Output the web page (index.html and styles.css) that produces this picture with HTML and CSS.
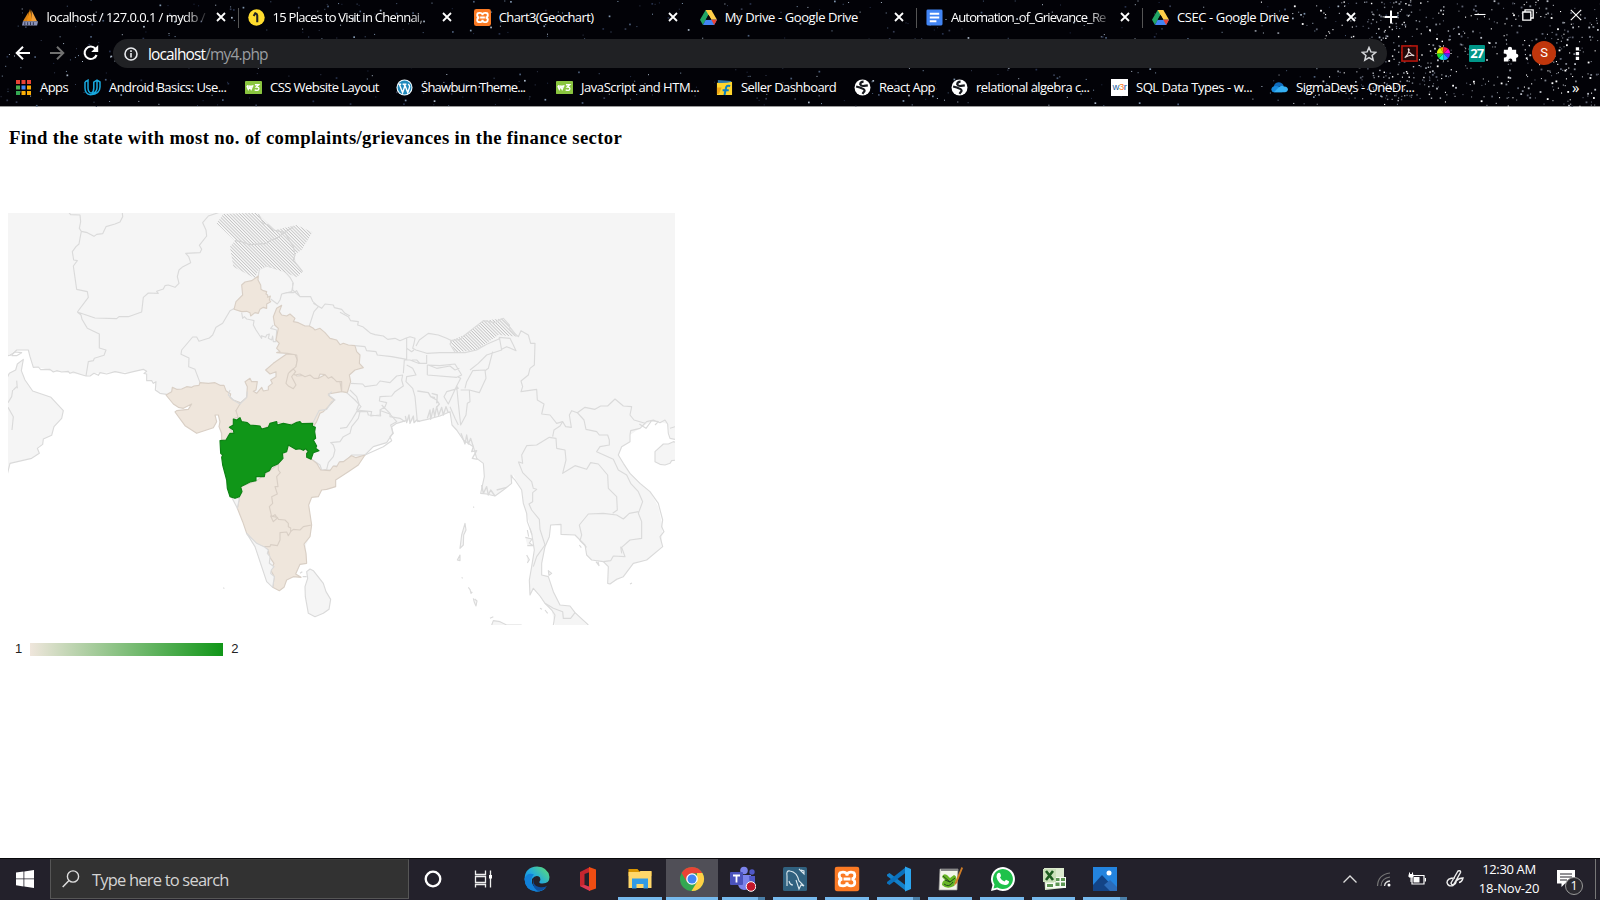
FILE: index.html
```html
<!DOCTYPE html>
<html lang="en">
<head>
<meta charset="utf-8">
<title>Chart3(Geochart)</title>
<link rel="stylesheet" href="styles.css">
</head>
<body>
<svg class="defs" width="0" height="0">
  <defs>
    <symbol id="x" viewBox="0 0 10 10"><path d="M1 1l8 8M9 1l-8 8" stroke="#fff" stroke-width="1.8"/></symbol>
    <symbol id="drive" viewBox="0 0 16 16"><path d="M5.3 1h5.4L5.2 10.8 2.8 15 0 10.2z" fill="#22a565"/><path d="M5.3 1h5.4L16 10.2h-5.4z" fill="#ffcf48"/><path d="M2.8 15L5.4 10.2H16L13.3 15z" fill="#4285f4"/><path d="M8 5.4l2.7 4.8H5.3z" fill="#05070b"/><path d="M10.6 10.2H16L13.3 15z" fill="#ea4335"/></symbol>
    <symbol id="xampp" viewBox="0 0 18 18"><rect width="18" height="18" rx="2.5" fill="#fb7a24"/><path d="M5 4.2q-1.6 0-1.6 2.3T5.6 9q-2.2.3-2.2 2.6T5 13.8q4 .6 4-2.5 0 3.100 4 2.500 1.600-.300 1.600-2.300T12.400 9q2.200-.300 2.200-2.500T13 4.200Q9 3.600 9 6.700 9 3.600 5 4.200zM6.500 9h5" fill="none" stroke="#fff" stroke-width="2"/></symbol>
    <symbol id="w3" viewBox="0 0 18 14"><rect width="18" height="14" rx="1" fill="#8ac53f"/><path d="M2 5.500l1.500 3.500 1.500-3 1.500 3L8 5.500M2 5q3 1.500 7 0M10.500 4h4L12 6.500q3 0 2.600 2-.8 2.500-4.400 1" fill="none" stroke="#fff" stroke-width="1.500"/></symbol>
    <symbol id="globe" viewBox="0 0 16 16"><circle cx="8" cy="8" r="7.500" fill="#fff"/><path d="M9 2.500Q6 2.500 5.800 5 7 7 9.500 6.500L13 6M2 7l3.500 1 3.500 1.500q2 1.500 0 3L8 14" fill="none" stroke="#16181d" stroke-width="2"/></symbol>
    <pattern id="hatch" width="6.800" height="8" patternUnits="userSpaceOnUse" patternTransform="rotate(-45)"><rect width="6.800" height="8" fill="#fafafa"/><path d="M3 0V8" stroke="#b9b9b9" stroke-width="2.300"/></pattern>
    <linearGradient id="edge" x1="0" y1="1" x2="1" y2="0"><stop stop-color="#0878d4"/><stop offset=".5" stop-color="#22a9df"/><stop offset="1" stop-color="#63e26b"/></linearGradient>
  </defs>
</svg>

<header class="chrome">
  <svg class="stars" id="stars" width="1600" height="107"></svg>
  <div class="tabs">
    <div class="tab"><svg class="fav" viewBox="0 0 18 18"><path d="M1 13L7 3V13z" fill="#d98213"/><path d="M5 13L8.500 0l2.500 13z" fill="#f29111"/><path d="M10 13V1l6 12z" fill="#f4a23a"/><path d="M1 13h16l-1 4.500H0z" fill="#8b93b8"/><path d="M3 14v3M6 14v3M9 14v3M12 14v3" stroke="#292d45"/></svg><span class="title fade t1">localhost / 127.0.0.1 / mydb /</span><svg class="close"><use href="#x"/></svg></div>
    <div class="tab sep"><svg class="fav" viewBox="0 0 18 18"><circle cx="9" cy="9" r="8.700" fill="#ffdc2e"/><path d="M9.800 14V7q0-2-2-2.500L6 7.500" fill="none" stroke="#222" stroke-width="2.200"/></svg><span class="title fade t2">15 Places to Visit in Chennai,</span><svg class="close"><use href="#x"/></svg></div>
    <div class="tab"><svg class="fav"><use href="#xampp"/></svg><span class="title t3">Chart3(Geochart)</span><svg class="close"><use href="#x"/></svg></div>
    <div class="tab"><svg class="fav"><use href="#drive"/></svg><span class="title t4">My Drive - Google Drive</span><svg class="close"><use href="#x"/></svg></div>
    <div class="tab sep"><svg class="fav" viewBox="0 0 18 18"><rect x=".5" y=".5" width="17" height="17" rx="1.500" fill="#4285f4"/><path d="M4 5h10M4 9h10M4 13h7" stroke="#fff" stroke-width="2"/></svg><span class="title fade t5">Automation_of_Grievance_Re</span><svg class="close"><use href="#x"/></svg></div>
    <div class="tab sep"><svg class="fav"><use href="#drive"/></svg><span class="title t6">CSEC - Google Drive</span><svg class="close"><use href="#x"/></svg></div>
    <svg class="plus" viewBox="0 0 14 14"><path d="M7 .5v13M.5 7h13" stroke="#fff" stroke-width="2"/></svg>
    <div class="winbtns">
      <svg viewBox="0 0 12 12"><path d="M.5 5.500h11" stroke="#fff" stroke-width="1.100"/></svg>
      <svg viewBox="0 0 12 12"><path d="M.8 3h8v8.200h-8zM3 3V.8h8.200V9H9" fill="none" stroke="#fff" stroke-width="1.300"/></svg>
      <svg viewBox="0 0 12 12"><path d="M.8.800l10.400 10.400M11.200.800L.8 11.200" stroke="#fff" stroke-width="1.200"/></svg>
    </div>
  </div>

  <div class="toolbar">
    <div class="nav">
      <svg viewBox="0 0 16 16"><path d="M15 8H2M8 1.700L1.700 8 8 14.300" fill="none" stroke="#fff" stroke-width="2"/></svg>
      <svg viewBox="0 0 16 16"><path d="M1 8h13M8 1.700L14.300 8 8 14.300" fill="none" stroke="#717171" stroke-width="2"/></svg>
      <svg viewBox="0 0 16 16"><path d="M13.600 10A6.200 6.200 0 1 1 12.500 3.700" fill="none" stroke="#fff" stroke-width="2.100"/><path d="M15.200 0v7h-7z" fill="#fff"/></svg>
    </div>
    <div class="omnibox">
      <svg class="info" viewBox="0 0 14 14"><circle cx="7" cy="7" r="6" fill="none" stroke="#e8eaed" stroke-width="1.600"/><path d="M7 6v4.500M7 3.300v1.600" stroke="#e8eaed" stroke-width="1.600"/></svg>
      <span class="url">localhost<i>/my4.php</i></span>
      <svg class="bookmark-star" viewBox="0 0 16 16"><path d="M8 1.500l1.900 4.400 4.800.4-3.600 3.200 1.100 4.700L8 11.700l-4.200 2.500 1.100-4.700L1.300 6.300l4.800-.4z" fill="none" stroke="#d5d7da" stroke-width="1.500"/></svg>
    </div>
    <div class="exts">
      <svg viewBox="0 0 18 18"><rect x="1" y="1" width="16" height="16" fill="#210708" stroke="#b5160c" stroke-width="1.700"/><path d="M4 13.500Q8 10 8.700 5q-.7-2-1-.3Q9 10 14 11.300q-4-1.500-9 1.500" fill="none" stroke="#e8dada" stroke-width="1.200"/></svg>
      <svg viewBox="0 0 18 18"><path d="M9 9L5.500 2.900A7 7 0 0 1 9 2z" fill="#ff9b00"/><path d="M9 9V2a7 7 0 0 1 5 2z" fill="#ff1744"/><path d="M9 9l5-5a7 7 0 0 1 2 5z" fill="#f0c"/><path d="M9 9h7a7 7 0 0 1-2 5z" fill="#4b27ff"/><path d="M9 9l5 5a7 7 0 0 1-5 2z" fill="#1aa3ff"/><path d="M9 9v7a7 7 0 0 1-5-2z" fill="#14efcf"/><path d="M9 9l-5 5a7 7 0 0 1-2-5z" fill="#19dc29"/><path d="M9 9H2a7 7 0 0 1 3.500-6.100z" fill="#dcf000"/><path d="M9 0v2M9 16v2M0 9h2M16 9h2" stroke="#999"/></svg>
      <span class="cal">27</span>
      <svg viewBox="0 0 18 18"><path d="M2 5h4.200V4a2.200 2.200 0 0 1 4.400 0v1H15v4.300h.6a2.200 2.200 0 0 1 0 4.300H15v3.800h-4v-1a2.100 2.100 0 0 0-4.200 0v1H2v-4.200h1a2.100 2.100 0 0 0 0-4.200H2z" fill="#fff"/></svg>
      <span class="avatar">S</span>
      <svg viewBox="0 0 18 18"><path d="M7.200 2.500h3.500v3.300H7.200zM7.200 7.500h3.500v3.300H7.200zM7.200 12.500h3.500v3.300H7.200z" fill="#fff"/></svg>
    </div>
  </div>

  <div class="bookmarks">
    <div class="bm b1"><svg viewBox="0 0 17 17"><path d="M1 1h4v4H1zM6.500 1h4v4h-4zM12 1h4v4h-4z" fill="#ea4335"/><path d="M1 6.500h4v4H1z" fill="#4caf50"/><path d="M6.500 6.500h4v4h-4z" fill="#4285f4"/><path d="M12 6.500h4v4h-4zM6.500 12h4v4h-4zM12 12h4v4h-4z" fill="#fbad05"/><path d="M1 12h4v4H1z" fill="#34a853"/></svg><span>Apps</span></div>
    <div class="bm b2"><svg viewBox="0 0 17 17"><path d="M1 3l3-1.800V9q0 4 3.300 5.300M1 3v6q0 6 5.500 6.800Q16 15 16 8V3l-3-1.800-3.200 1.900V9q0 4-2.500 5.500M13 1.200v7.500Q13 13 8 15" fill="none" stroke="#18a9df" stroke-width="1.500"/></svg><span>Android Basics: Use...</span></div>
    <div class="bm b3"><svg><use href="#w3"/></svg><span>CSS Website Layout</span></div>
    <div class="bm b4"><svg viewBox="0 0 18 18"><circle cx="9" cy="9" r="8.500" fill="#f2fbff"/><circle cx="9" cy="9" r="7.300" fill="#218abc"/><path d="M2.500 5.500h3M3.500 5.500l3.500 9 2.300-7-.8-2M7 5.500h4M9 5.500l3.500 9 2-6.300q0-1.500-1.500-3" fill="none" stroke="#fff" stroke-width="1.500"/></svg><span>Shawburn Theme...</span></div>
    <div class="bm b5"><svg><use href="#w3"/></svg><span>JavaScript and HTM...</span></div>
    <div class="bm b6"><svg viewBox="0 0 18 18"><path d="M2 1l14 1v3H2z" fill="#3279a9"/><path d="M1 4q8 1 16-1v14H1z" fill="#ffd52d"/><path d="M1 9h5l-3 7H1z" fill="#efa516"/><path d="M15 7.500q-4-1.500-4.500 2.500L9 17M7 12h6.500" fill="none" stroke="#087fc4" stroke-width="2.200"/></svg><span>Seller Dashboard</span></div>
    <div class="bm b7"><svg><use href="#globe"/></svg><span>React App</span></div>
    <div class="bm b8"><svg><use href="#globe"/></svg><span>relational algebra c...</span></div>
    <div class="bm b9"><b class="w3r">w<i>3</i>r</b><span>SQL Data Types - w...</span></div>
    <div class="bm b10"><svg viewBox="0 0 18 18"><path d="M3 9q0-5 5-5.500 4 0 5.500 4z" fill="#0f6cbd"/><path d="M1 13q-2-4 3-5.500 3-.500 4 .5l4 6H3q-1.500 0-2-1z" fill="#1689dc"/><path d="M8 9q3-3 6-1 4 .3 4 3.500-.5 2.500-3 2.500H3z" fill="#36b0f3"/></svg><span>SigmaDevs - OneDr...</span></div>
    <span class="more">»</span>
  </div>
</header>

<main class="page">
  <h4>Find the state with most no. of complaints/grievances in the finance sector</h4>
  <svg class="map" viewBox="8 213 667 412" width="667" height="412">
    <rect x="8" y="213" width="667" height="412" fill="#f5f5f5"/>

    <!-- seas -->
    <g fill="#fff">
      <path transform="translate(0 200) scale(.33333)" d="M24 467L35 458 50 450 85 450 90 470 100 502 130 505 160 516 185 516 220 521 245 524 258 528 290 520 345 517 400 515 430 508 440 520 440 542 465 545 470 575 500 583 520 612 545 625 575 612 565 628 525 636 555 677 590 700 640 900 640 1300 0 1300 0 467z"/>
      <path transform="translate(150 390) scale(.33333)" d="M75 66L105 107 140 130 187 113 195 75 205 75 207 110 215 150 210 160 212 200 222 240 232 300 245 322 262 355 278 395 290 430 315 470 335 530 350 575 368 592 388 602 402 592 410 570 430 560 455 560 437 552 450 525 470 520 468 465 480 440 485 405 476 345 485 322 505 318 515 300 530 298 557 290 557 270 595 245 625 225 645 195 760 195 760 720-50 720-50 66z"/>
      <path transform="translate(340 300) scale(.33333)" d="M75 465L100 440 140 428 158 400 155 380 170 370 198 362 240 362 300 348 330 335 336 375 370 420 400 440 410 475 430 490 433 530 422 580 465 588 515 550 520 525 545 570 550 610 560 640 575 700 583 750 575 800 568 840 570 885 580 865 615 910 635 930 645 980 0 980 0 560z"/>
      <path transform="translate(340 300) scale(.33333)" d="M983 372L940 360 900 385 870 405 870 425 845 440 835 465 870 520 930 575 955 620 968 680 965 740 920 780 880 790 850 830 810 852 803 850 805 800 790 785 755 780 740 765 735 735 705 705 663 703 663 673 632 675 628 710 615 740 605 790 605 825 625 830 640 875 660 915 690 918 745 980 1010 980 1010 420 990 415z"/>
    </g>

    <!-- west: coastlines, Afghanistan, Pakistan, northern India -->
    <g class="line" transform="translate(0 200) scale(.33333)">
      <path class="land" d="M18 540L28 520 47 510 52 492 70 478 64 512 75 540 98 573 153 592 190 632 185 655 162 680 155 706 130 717 128 733 112 745 118 760 95 775 30 790 20 830 10 830z"/>
      <path d="M24 622L40 650 36 690M40 570L50 560M38 570L35 590 24 608M50 542L52 565"/>
      <path d="M24 467L35 465 50 450 85 450 90 470 100 502 115 501 122 509 150 508 160 516 170 512 185 516 205 514 210 520 220 516 245 524 258 528 270 528 282 520 295 526 300 518 320 522 345 515 375 521 400 515 430 508 440 514 432 520 440 522 440 542 455 542 460 550 468 545 466 570 480 580 500 583"/>
      <path d="M30 465L45 456 65 458 50 467 35 467"/>
      <path d="M207 38L212 44 240 45 242 65 238 85 244 94 262 98 282 109 290 103 308 101 318 80 345 72 360 66 368 50 367 38M244 94L240 115 237 132 228 140 217 155 221 180 232 182 220 198 230 268 262 275 265 292 232 336M232 336L285 354 350 356 357 350 385 350 425 336 430 292 445 279 475 280 470 274 490 267 495 257 505 255 525 262 537 250 532 230 537 210 546 202 572 188 566 170 557 160 600 158 605 148 598 136 620 108 618 90 608 68 625 48 655 38M232 336L243 345 246 358 262 385 298 402 298 444 318 450 312 466 283 475 280 482 265 485 258 528"/>
      <path d="M704 325L690 332 668 370 648 382 638 405 628 414 597 424 590 411 578 411 545 450 543 463 567 474 566 500 585 508 600 548M775 228L778 208 800 198 835 208 855 215 870 232 880 250 875 275 845 282 840 300 832 312 812 297M845 282L860 278 880 278 890 272 900 290 932 290 938 304 955 320 942 335 937 350 928 378M878 245L878 270 900 290M725 338L728 355 733 350 740 357 755 360 762 362 760 375 768 390 778 405 785 415 785 407 797 412 800 405 808 402 805 415 815 420 818 408 820 425 828 425 830 390 812 385 820 375M940 310L965 325 975 312 1000 315 1003 323 1025 328 1035 340 1050 348"/>
      <path fill="url(#hatch)" stroke="none" d="M650 70L670 42 770 38 825 90 890 75 937 97 905 150 882 165 888 190 908 215 890 232 850 215 800 198 775 210 765 235 700 200 690 140 705 122z"/>
      <path class="faint" d="M705 122L725 125 750 134 800 130 812 120 830 115 850 100 880 80M775 42L782 55 790 70 805 75 820 90 855 98 862 110 870 125 880 140 885 165 880 180 888 190 908 215"/>
      <g class="one">
        <path d="M775 228L774 240 782 255 783 268 790 272 800 275 798 282 803 285 803 292 811 288 808 300 812 305 800 312 800 325 790 322 780 328 775 340 765 338 752 348 750 338 740 334 725 335 702 328 708 305 728 285 725 255 735 246 755 242z"/>
        <path d="M498 585L515 575 517 562 530 568 545 567 560 560 575 562 582 558 597 556 600 548 625 550 645 548 660 556 672 556 678 572 692 582 690 592 700 600 722 608 720 622 708 632 718 650 700 656 702 668 692 690 700 700 685 705 680 720 665 722 665 700 657 680 660 665 655 645 645 645 650 665 640 683 590 700 555 677 525 636 530 632 565 628 575 612 550 625 535 622 520 612z"/>
        <path d="M722 608L740 592 742 560 735 545 750 535 755 545 772 545 768 570 760 574 770 580 785 562 790 573 805 570 805 560 817 550 812 540 828 530 828 515 810 522 797 510 820 490 860 462 885 463 892 480 888 500 880 515 890 528 930 525 955 535 975 524 995 532 1020 545 1025 575 985 582 988 588 1003 600 985 620 970 635 960 640 950 665 940 680 890 668 860 675 825 665 790 688 740 685 715 655 708 632z"/>
        <path d="M845 316L830 325 820 350 824 375 835 385 828 420 838 430 830 445 840 455 830 458 862 460 890 465 892 480 888 500 870 515 885 525 900 522 915 530 930 525 942 535 955 535 960 522 975 524 985 535 995 530 1010 545 1025 545 1025 575 1042 578 1052 545 1048 525 1065 510 1090 503 1078 490 1080 465 1070 455 1065 437 1045 435 1030 430 1020 434 1010 420 990 415 975 398 960 385 945 390 940 385 928 378 915 378 895 368 880 365 885 355 870 342 860 348 845 345 838 335z"/>
        <path d="M865 520L880 507 887 515 875 530 888 555 880 566 865 558 858 550z"/>
      </g>
    </g>

    <!-- southern India and Sri Lanka -->
    <g class="line" transform="translate(150 390) scale(.33333)">
      <path class="land" d="M470 545L480 537 490 542 520 580 528 605 542 628 537 658 520 670 495 680 475 670 466 620 465 590 473 565z"/>
      <path d="M450 550L457 545M458 560L470 560M220 593l3 3"/>
      <path d="M488 100L507 62 530 58 545 35 555 30 535 15 545 5M485 208L510 225 515 240 530 238 535 218 550 200 555 180 550 165 542 158 570 155 580 140 600 130 605 110 625 85 630 65M515 240L545 240 552 228 565 228 570 215 585 215 605 195 645 195M600 0L620 20 627 42 620 60 665 65 662 78 690 75 692 62 720 72 740 95 722 105 730 130 720 140 725 152 700 170 645 195M240 0L235 15 250 30 270 42 290 22 292 5"/>
      <g class="one">
        <path d="M272 290L320 272 385 222 415 165 440 178 470 178 485 208 500 220 512 240 540 242 550 228 560 230 568 216 580 215 590 208 605 197 618 203 645 195 625 225 595 245 557 270 557 290 530 298 515 300 505 320 485 322 476 345 485 405 480 440 462 462 468 490 470 520 450 523 437 552 453 562 430 560 410 570 402 592 388 602 368 592 373 560 362 540 372 520 358 500 355 480 340 470 315 460 290 430 278 395 262 355 268 325z"/>
        <path d="M385 222L385 240 391 248 380 260 384 290 375 290 382 312 365 320 368 340 358 350 365 380 375 374 382 384 370 395 362 378 382 382 385 388 405 390 415 400 415 410 422 414 422 425 415 437 410 426 390 428 390 450 382 467 362 464 360 470 338 470M422 425L430 418 450 420 460 410 485 405"/>
      </g>
      <path class="land" d="M290 430L315 470 335 530 350 575 368 592 373 560 362 550 364 540 372 530 358 520 360 500 352 490 355 480 345 472 320 460z"/>
      <path class="land" d="M245 322L262 355 268 325z"/>
      <path class="two" d="M250 87L260 90 270 83 275 95 292 98 300 105 330 108 335 117 355 112 360 100 380 95 382 105 400 100 425 105 438 98 450 95 455 101 488 100 487 108 496 112 494 125 497 145 490 150 500 168 497 175 507 182 490 188 483 208 470 202 470 190 475 185 467 176 460 181 450 176 437 178 415 165 410 185 397 190 399 205 390 215 383 222 365 230 358 242 345 248 343 260 318 260 318 272 300 276 272 290 276 305 268 320 255 325 240 320 232 295 230 270 218 225 215 202 218 195 212 190 210 152 228 150 240 130 252 130 250 120 238 112 250 105z"/>
    </g>

    <!-- north-east India, Bangladesh, Indochina -->
    <g class="line" transform="translate(340 300) scale(.33333)">
      <path fill="url(#hatch)" stroke="none" d="M330 122L375 105 430 62 490 55 535 110 475 105 410 150 345 157z"/>
      <path d="M0 37L25 50 32 62 55 65 53 75 68 80 80 90 92 100 105 104 130 108 143 118 165 115 180 122 197 115 210 110 225 115 222 130 218 145 228 150 260 160 300 158 345 157 375 158 410 150 440 133 475 118 480 112M228 138L238 120 265 100 295 105 320 115 335 122 330 132 345 157M330 122L360 118 375 105 400 85 430 62 465 68 490 55 508 75 510 90 535 110 543 92 565 105 572 130 585 130 583 195 570 205 565 225 543 243 548 260 543 275 590 268 592 300 612 312 605 342 630 345 650 370 668 365 677 380 694 382 688 345 695 332 712 338 735 322 765 328 782 318 803 318 825 297 850 318 875 320 870 345 882 360 915 370M45 137L75 140 80 152 108 155 112 165 155 170 200 178 200 115M200 145L215 155 222 150M32 250L68 252 75 260 110 255 120 243 150 248 170 228 188 225 185 240 190 258 165 275 155 288 120 290 118 303 140 308 135 320 120 330 122 348 85 345 82 335 50 335M20 278L45 300 63 320 50 335 35 360 20 382 0 385M125 315L150 340 150 350 180 355 195 365M190 220L193 180 210 180 235 190 260 190 260 165M200 195L218 205 228 225 200 230 198 245 218 265 225 290 232 365M215 180L230 180 240 190 255 190M262 225L262 195 300 197 345 192 365 225 350 232 262 225M265 195L290 205 330 198 345 210 358 205M352 230L362 235 350 258 355 265 320 275 312 290 325 312 340 280 350 258M350 258L355 310 362 375 378 345 382 310 390 305 388 270 362 270M388 270L418 278 438 235 435 210 398 212 380 245 375 265M390 210L415 190 440 165 485 150 478 112 510 115 520 135 528 152 500 140 485 148M458 155L445 205 435 212M330 320L345 355 355 375"/>
      <path d="M75 465L100 440 140 428 158 400 155 380 170 370 198 362M232 365L262 358 300 348 330 335 336 375 350 390 370 420 400 440 410 475 430 490 433 530 422 580 440 582 465 588 490 570 515 550 513 525 520 535 525 540 545 570 550 610 560 640 562 665 575 700 583 750 575 800 568 840 570 885 580 865 600 888 615 910 635 930 645 945 640 975"/>
      <path class="coast" d="M196 348L200 368 207 345 210 370 220 348 222 368 230 360 240 365M262 355L270 330 272 358 280 325 284 350 290 320 296 346 305 322 310 345 318 320 325 338M232 273L265 278 272 290 290 300 298 312 290 322M275 280L292 285 290 310M272 290L285 293M363 400L375 432 380 405 385 432 392 415 400 440 395 455 410 452 397 475 413 478M425 555L430 580 440 560 445 585 452 570 465 588M470 570L500 562"/>
      <path d="M983 372L975 360 960 368 940 360 920 365 900 385 872 392 870 405 870 425 845 440 835 465 850 490 870 520 900 550 930 575 955 610 968 660 965 680 972 695 960 710 968 740 920 780 880 790 850 830 830 838 810 852 803 850 805 800 790 785 755 780 740 765 735 735 705 705 663 703 663 673 632 675 628 710 615 740 605 790 605 825 625 830 640 875 660 915 690 918 705 938 745 975M983 372L985 400 990 415 1005 418M1005 380L990 385M898 372L918 385 935 362 955 365 945 375"/>
      <path class="land" d="M1010 428L1000 425 985 432 970 432 945 455 945 485 960 493 975 495 990 490 995 482 1010 480z"/>
      <path d="M535 485L548 490 545 465 560 437 590 435 628 412 648 415 650 445 675 450 678 480 668 520 705 497 740 508 752 488 775 492 803 525 805 565 830 590 832 630 818 640M668 365L660 378 642 390 638 410M712 338L732 360 738 388 770 395 778 405 803 405 808 420 808 435 780 440 770 455 820 478 835 510 860 525 872 550 895 575 908 605 895 640 905 665 905 715 870 720 845 742 855 770 820 768 812 782 790 785M895 635L868 640 850 657 830 645 790 640 745 642 718 675 725 705 720 722 740 742M535 485L548 518 575 545 580 565 590 568 578 578 578 605 567 612 575 630 598 658 600 688 615 735 590 770 580 800M615 910L640 925 668 935 670 955 692 955 705 938M842 740L845 760"/>
      <path class="land" d="M450 955L460 950M455 975L460 962 480 965 500 975 545 975"/>
      <path class="land" d="M375 670L365 705 360 745 370 735 371 705 378 690zM360 765l-8 15 8 2zM400 620l2 3M365 832l3 3M385 862l6 8M390 868l3 12 4-4M400 895l3 12 5 11 3-15-7-6M562 690l4 20M556 712l20 5-8 12 12 8-18 0M560 765l8 14-6 10M570 685l5 18M625 812l10 8-8 6zM718 735l6 8M768 785l9 12-3-12M600 925l6 3M615 930l8 10M870 852l6-3"/>
    </g>
  </svg>
  <div class="legend"><span>1</span><div class="bar"></div><span>2</span></div>
</main>

<footer class="taskbar">
  <div class="start"><svg viewBox="0 0 18 18"><path d="M0 2.600L7.500 1.500v7H0zM8.300 1.400L18 0v8.500H8.300zM0 9.300h7.500v7.100L0 15.300zM8.300 9.300H18V18l-9.700-1.400z" fill="#fff"/></svg></div>
  <div class="search"><svg viewBox="0 0 18 18"><circle cx="11" cy="6.500" r="5.600" fill="none" stroke="#ddd" stroke-width="1.400"/><path d="M7 10.500L.7 17" stroke="#ddd" stroke-width="1.500"/></svg><span>Type here to search</span></div>
  <div class="apps">
    <div class="app"><svg viewBox="0 0 26 26"><circle cx="13" cy="13" r="7.300" fill="none" stroke="#fff" stroke-width="2.300"/></svg></div>
    <div class="app tv"><svg viewBox="0 0 26 26"><path d="M5.500 4.500v4h10v-4M5.500 21.500v-3h10v3M5.500 10.500h10v6h-10zM20.500 4.500v17" fill="none" stroke="#eee" stroke-width="1.300"/><path d="M19 9h3v3.500h-3z" fill="#fff"/></svg></div>
    <div class="app"><svg viewBox="0 0 26 26"><path d="M.5 13Q1 1 13 .5 24 1 25.500 11q0 6.500-7 6.500-4 0-3-2 1.500-1.500.5-4Q12 8 8 13q-1 8 6 10.500 5 .5 8-2Q18 26 12 25.500 1 24 .5 13z" fill="url(#edge)"/><path d="M.5 13Q3 6 10 8.500 6 12 8 18q2 4 6 5.500 5 .5 8-2Q18 26 12 25.500 1 24 .5 13z" fill="#1180d8"/><path d="M10 12q-2 8 5 9 4 1 8-1-4 6-10 4.500Q7 20 10 12z" fill="#0d4f9f"/></svg></div>
    <div class="app"><svg viewBox="0 0 26 26"><path d="M5 6L15 1v5L9.500 8v11L15 21v4L5 20z" fill="#c7262f"/><path d="M14 1l7 2.500v19L14 25z" fill="#ef4d12"/><path d="M5 20l4.500-1 5.500 2v4z" fill="#dc3a55"/></svg></div>
    <div class="app run"><svg viewBox="0 0 26 26"><path d="M1.500 3h9l2 2.500h12V10h-23z" fill="#d99500"/><path d="M1.500 6h11l1-1h11v17h-23z" fill="#ffd76a"/><path d="M5 22.500v-10h16v10h-4.500V18h-7v4.500z" fill="#329be5"/></svg></div>
    <div class="app run active"><svg viewBox="0 0 26 26"><circle cx="13" cy="13" r="12" fill="#33a852"/><path d="M2.600 7A12 12 0 0 1 23.400 7L13 7.500 8 16z" fill="#ea4335"/><path d="M23.400 7A12 12 0 0 1 12.500 25L18 16V7z" fill="#ffcf45"/><circle cx="13" cy="13" r="5.800" fill="#fff"/><circle cx="13" cy="13" r="4.500" fill="#4285f4"/></svg></div>
    <div class="app run multi"><svg viewBox="0 0 26 26"><circle cx="14" cy="4.500" r="3.800" fill="#7b83eb"/><circle cx="22" cy="6" r="2.700" fill="#5059c9"/><path d="M8 9h13v9q-2 6-7 6-6-1-6-7z" fill="#7b83eb"/><path d="M19 10h6v8q-2 3-5 2z" fill="#5059c9"/><rect x="0" y="6" width="13" height="13" rx="1" fill="#4b53bc"/><path d="M3 9.500h7M6.500 9.500v7" stroke="#fff" stroke-width="1.800"/><circle cx="21" cy="20.500" r="4.800" fill="#c4182d" stroke="#fff"/></svg></div>
    <div class="app run"><svg viewBox="0 0 26 26"><rect x="1" y="1" width="24" height="24" rx="1.500" fill="#30617f"/><path d="M5 20V10q-1-6 3-5 7 1 9 10l5 5-3-1-2 4-3-9M7 15q1 4 4 4M17 3l5 5v-3l-3-1" fill="none" stroke="#dce9ef" stroke-width="1.100"/></svg></div>
    <div class="app run"><svg viewBox="0 0 26 26"><use href="#xampp" x=".5" y=".5" width="25" height="25"/></svg></div>
    <div class="app run multi"><svg viewBox="0 0 26 26"><path d="M1 8.500L3.500 7 20 19.500V25L1 10z" fill="#1380c9"/><path d="M1 17.500L3.500 19 20 6.500V1L1 16z" fill="#0a71bd"/><path d="M19 .5L25 3v20l-6 2.500z" fill="#2ba5ef"/></svg></div>
    <div class="app run"><svg viewBox="0 0 26 26"><path d="M3 3h18l-1 21H2z" fill="#f3f5e9" stroke="#999" stroke-width=".7"/><path d="M4 3h17v2H4z" fill="#888"/><path d="M5 11q1-4 5-2l3 3 4-3q3 1 2 5l-2 6q-7 4-12-1 0-4 3-5z" fill="#67b626"/><path d="M6 10l7 6 5-4M7 18q5 4 9-2M8 14l5 2" stroke="#23491c" fill="none"/><path d="M24.500 1L18 16l-1 4 3-3L26 2z" fill="#cf7c26"/></svg></div>
    <div class="app run"><svg viewBox="0 0 26 26"><path d="M2 25l1.500-6A12 12 0 1 1 8 23.500z" fill="#fff"/><path d="M4.500 22.500l1-4A10 10 0 1 1 8.500 21.500z" fill="#1fc24b"/><path d="M9 7q2-1 2.500 1l.5 2-1 1.500q1.500 3 4.500 4l1.500-1.800 3 1.500q0 4-4 3.800Q9 18 7.500 11 7.500 8 9 7z" fill="#fff"/></svg></div>
    <div class="app run"><svg viewBox="0 0 26 26"><path d="M3 2h20v20l-19 2z" fill="#dcebcf"/><path d="M13 11h12v11H5v-5h8z" fill="#f8fbf4"/><path d="M14.500 12h4v3h-4zM20 12h4v3h-4zM14.500 16.500h4V20h-4zM20 16.500h4V20h-4zM6 18h6v3H6z" fill="#5d9653"/><path d="M2 3h13v13H2z" fill="#c9e0b9"/><path d="M5 5l7 9M12 5l-7 9" stroke="#1d5c20" stroke-width="2.600"/></svg></div>
    <div class="app run multi"><svg viewBox="0 0 26 26"><rect x="1" y="1" width="24" height="24" fill="#2384de"/><path d="M1 19L10 9l15 16H1z" fill="#134486"/><path d="M12 19l6-5 7 7v4h-7z" fill="#2b6bb8"/><circle cx="17" cy="7" r="2.500" fill="#fff"/></svg></div>
  </div>
  <div class="tray">
    <svg class="chev" viewBox="0 0 16 16"><path d="M1.500 11.500L8 5l6.500 6.500" fill="none" stroke="#ddd" stroke-width="1.300"/></svg>
    <svg class="wifi" viewBox="0 0 16 16"><path d="M1.500 15Q2 3.500 14 2M5 15Q5.500 7 14 6" fill="none" stroke="#777" stroke-width="1.200"/><path d="M8.500 15Q9 10.500 14 10" fill="none" stroke="#ddd" stroke-width="1.300"/><circle cx="13" cy="14" r="1.500" fill="#fff"/></svg>
    <svg class="bat" viewBox="0 0 18 16"><path d="M4 4.500h12v8.500H4zM17.500 7v3.500" fill="none" stroke="#fff" stroke-width="1.200"/><path d="M5.500 6h6v5.500h-6z" fill="#fff"/><path d="M1 3.500h4V6H1zM1.500 1.500v2M4.500 1.500v2M3 6v5" fill="#fff" stroke="#fff"/></svg>
    <svg class="pen" viewBox="0 0 18 18"><path d="M5 13L12 1q3-1 2.500 1.500L8 14q-2 2-3-1zM9 8Q1 8 1 12.500 2 17 7 15.500 11 13 10 11q3-3 7-3-1 4-4 4.500" fill="none" stroke="#eee" stroke-width="1.400"/></svg>
    <div class="clock"><span>12:30 AM</span><span class="date">18-Nov-20</span></div>
    <div class="notif"><svg viewBox="0 0 18 18"><path d="M0 0h18v13.500H8L4.500 17v-3.500H0z" fill="#fff"/><path d="M3 4h12M3 7h12M3 10h7" stroke="#24222b"/></svg><b class="badge">1</b></div>
  </div>
</footer>
<script src="stars.js"></script>
</body>
</html>
```
FILE: styles.css
```css
* { box-sizing: border-box; }
body { margin: 0; width: 1600px; height: 900px; overflow: hidden; display: flex; flex-direction: column; background: #fff; font-family: "Open Sans", "Noto Sans", sans-serif; }
svg { display: block; flex: none; }
i { font-style: normal; }
.defs { position: absolute; }

.chrome { position: relative; height: 107px; background: #020207; color: #fff; border-bottom: 1px solid #999; display: flex; flex-direction: column; }
.stars { position: absolute; left: 0; top: 0; }
.tabs { position: relative; height: 34px; padding-left: 11.500px; display: flex; align-items: center; }
.tab { width: 226.100px; height: 34px; display: flex; align-items: center; padding-left: 10px; position: relative; }
.sep::before { content: ""; position: absolute; left: 0; top: 8px; width: 1px; height: 20px; background: #555; }
.fav { width: 17px; height: 17px; margin-right: 8px; }
.title { width: 163px; margin-right: 6px; overflow: hidden; white-space: nowrap; font-size: 13px; line-height: 20px; letter-spacing: -0.400px; }
.fade { -webkit-mask-image: linear-gradient(90deg, #000 84%, transparent); mask-image: linear-gradient(90deg, #000 84%, transparent); }
.t1 { letter-spacing: -0.550px; }
.t2 { letter-spacing: -0.750px; }
.t3 { letter-spacing: -0.600px; }
.t5 { letter-spacing: -0.850px; }
.close { width: 10px; height: 10px; }
.plus { width: 14px; height: 14px; margin-left: 15.500px; }
.winbtns { display: flex; gap: 36px; margin-left: 76px; padding-bottom: 4px; }
.winbtns svg { width: 12px; height: 12px; }

.toolbar { position: relative; height: 38px; display: flex; align-items: center; }
.nav { display: flex; gap: 18px; width: 113px; padding-left: 15px; }
.nav svg { width: 16px; height: 16px; }
.omnibox { width: 1274px; height: 29px; margin-top: 1px; border-radius: 15px; background: #202124; display: flex; align-items: center; padding: 0 10px 0 11px; }
.info { width: 14px; height: 14px; margin-right: 10px; }
.url { flex: 1; font-size: 15.500px; letter-spacing: -0.850px; }
.url i { color: #9a9da1; }
.bookmark-star { width: 16px; height: 16px; }
.exts { display: flex; align-items: center; padding-left: 6px; }
.exts > * { flex: none; }
.exts svg { width: 17px; height: 17px; margin: 0 8.200px; }
.cal { width: 16px; height: 17px; margin: 0 9px; background: #009688; border-radius: 1px; font: bold 13px/16px "Open Sans", sans-serif; text-align: center; letter-spacing: -1px; }
.avatar { width: 24px; height: 24px; margin: 0 5px; border-radius: 50%; background: #bf360c; font: 13px/24px Roboto, sans-serif; text-align: center; }

.bookmarks { position: relative; height: 30px; padding-left: 15px; display: grid; grid-template-columns: 69px 161px 151px 160px 160px 138px 97px 160px 160px 301px 20px; align-items: center; }
.bm { display: flex; align-items: center; gap: 8px; font-size: 13px; letter-spacing: -0.550px; white-space: nowrap; }
.bm svg { width: 17px; height: 17px; }
.b4 { letter-spacing: -0.750px; }
.b5, .b9, .b10 { letter-spacing: -0.450px; }
.w3r { width: 17px; height: 17px; background: #fff; color: #2762a0; font: 9.500px/16px "Liberation Sans", sans-serif; letter-spacing: -0.500px; text-align: center; }
.w3r i { color: #ff7b22; }
.more { font-size: 15px; line-height: 18px; }

.page { height: 751px; padding: 0 8px; background: #fff; }
h4 { margin: 0; padding: 20px 0 0 1px; height: 106px; font: bold 18.700px/22px "Liberation Serif", serif; letter-spacing: 0.340px; white-space: nowrap; color: #000; }
.line { fill: none; stroke: #dadada; stroke-width: 3.400; stroke-linejoin: round; }
.coast { stroke-width: 4; }
.faint { stroke: #d4d4d4; }
.land { fill: #f5f5f5; }
.one { fill: #efe6dc; stroke: #d9cfc5; }
.two { fill: #109618; stroke: #0c8213; }
.legend { display: flex; align-items: center; gap: 8px; height: 14px; margin-top: 17px; padding-left: 7px; font: 13px/14px "Liberation Sans", sans-serif; color: #222; }
.bar { width: 193px; height: 13px; background: linear-gradient(90deg, #efe6dc, #109618); }

.taskbar { height: 42px; padding-bottom: 1px; background: #23212b; border-top: 1px solid #08080a; display: flex; color: #fff; }
.start { width: 50px; display: flex; align-items: center; padding-left: 16px; }
.start svg { width: 18px; height: 18px; }
.search { width: 359px; background: #323232; border: 1px solid #565656; border-top-color: #3c3c3c; display: flex; align-items: center; padding-left: 11px; gap: 12px; font-size: 16.500px; letter-spacing: -0.800px; color: #d4d4d4; }
.search svg { width: 18px; height: 18px; }
.apps { display: flex; margin-left: -1.500px; }
.app { width: 51.700px; display: flex; align-items: center; justify-content: center; position: relative; }
.app svg { width: 26px; height: 26px; }
.tv svg { margin-right: 4px; }
.run::after { content: ""; position: absolute; left: 4px; right: 4px; bottom: -1px; height: 3px; background: #76b9ed; }
.active { background: #504f57; }
.active::after { left: 0; right: 0; }
.multi::after { background: linear-gradient(90deg, #76b9ed 83%, #4a7fa8 83%); }
.tray { flex: 1; display: flex; align-items: center; justify-content: flex-end; border-right: 1px solid #777; margin-right: 4px; }
.chev, .wifi { width: 16px; height: 16px; }
.chev { margin-right: 18px; }
.wifi { margin-right: 16px; }
.bat { width: 18px; height: 16px; margin-right: 20px; }
.pen { width: 18px; height: 18px; margin-right: 12px; }
.clock { width: 66px; display: flex; flex-direction: column; align-items: center; font-size: 13px; line-height: 19px; letter-spacing: -0.350px; white-space: nowrap; }
.date { letter-spacing: -0.200px; }
.notif { position: relative; width: 38px; margin-left: 15px; }
.notif svg { width: 18px; height: 18px; }
.badge { position: absolute; left: 8px; top: 7px; width: 18px; height: 18px; border: 1px solid #999; border-radius: 50%; background: #2b2a30; font: 12.500px/16px "Open Sans", sans-serif; text-align: center; }
```
FILE: stars.js
```js
// Scatter a repeatable starfield over the browser frame, denser to the right.
(function () {
  var seed = 41;
  function rnd() {
    seed = (seed * 1103515245 + 12345) % 2147483648;
    return seed / 2147483648;
  }
  var colours = ['#4b5d78', '#7e93ab', '#343b50', '#a9b6c6', '#26304a'];
  var bright = ['#ffffff', '#b8bcc4', '#80858f', '#5c6170'];
  var out = '';
  function star(x, y, set, s) {
    out += '<rect x="' + x.toFixed(1) + '" y="' + y.toFixed(1) + '" width="' + s + '" height="' + s + '" fill="' + set[Math.floor(rnd() * set.length)] + '"/>';
  }
  for (var i = 0; i < 620; i++) star(rnd() * 1400, rnd() * 106, colours, rnd() > 0.7 ? 1.7 : 1);
  for (i = 0; i < 480; i++) star(1230 + Math.sqrt(rnd()) * 370, rnd() * 106, bright, rnd() > 0.7 ? 1.8 : 1.1);
  for (i = 0; i < 150; i++) star(1375 + (rnd() + rnd() - 1) * 60 + 20, rnd() * 100, bright, 1.4);
  document.getElementById('stars').innerHTML = out;
})();
```
